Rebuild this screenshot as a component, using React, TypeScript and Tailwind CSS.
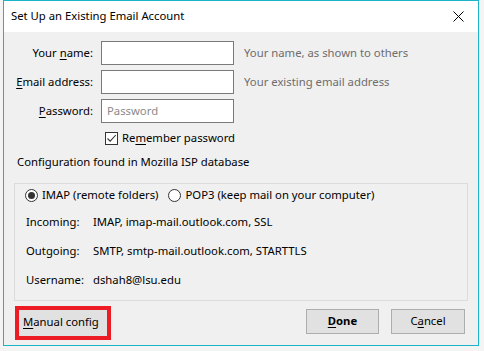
import React from 'react'

const font = { fontFamily: '"Noto Sans", "Open Sans", sans-serif' }

function U({ children }: { children: React.ReactNode }) {
  return <span className="underline underline-offset-2 decoration-1">{children}</span>
}

function Field({ label, hint, placeholder }: { label: React.ReactNode; hint?: string; placeholder?: string }) {
  return (
    <div className="flex items-center h-[24px]">
      <div className="w-[89px] text-right text-[#000]">{label}</div>
      <div className="ml-[8px] w-[133px] h-[24px] border border-[#7a7a7a] bg-white flex items-center px-[5px] text-[#8a8a8a]">
        {placeholder}
      </div>
      {hint && <div className="ml-[10px] text-[#6d6d6d]">{hint}</div>}
    </div>
  )
}

function Radio({ checked, label }: { checked?: boolean; label: string }) {
  return (
    <div className="flex items-center gap-[4px]">
      <span className="w-[13px] h-[13px] rounded-full border border-[#333] bg-white flex items-center justify-center">
        {checked && <span className="w-[7px] h-[7px] rounded-full bg-[#333]" />}
      </span>
      <span>{label}</span>
    </div>
  )
}

function Row({ label, value }: { label: string; value: string }) {
  return (
    <div className="flex items-center h-[18px]">
      <span className="w-[67px]">{label}</span>
      <span>{value}</span>
    </div>
  )
}

export default function App() {
  return (
    <div className="w-[484px] h-[351px] bg-[#f4f4f4] pl-[3px] pr-[5px] pb-[5px] text-[11.3px] text-[#1a1a1a]" style={font}>
      <div className="w-[476px] h-[346px] border border-[#1cb4c8] bg-[#f0f0f0] flex flex-col">
        {/* Title bar */}
        <div className="h-[31px] bg-white flex items-center justify-between pl-[7px] pr-[14px] flex-shrink-0">
          <span className="text-[#000]">Set Up an Existing Email Account</span>
          <svg width="11" height="11" viewBox="0 0 11 11">
            <path d="M0.5 0.5 L10.5 10.5 M10.5 0.5 L0.5 10.5" stroke="#000" strokeWidth="1" />
          </svg>
        </div>

        {/* Form */}
        <div className="flex flex-col gap-[5px] pt-[9px]">
          <Field label={<>Your <U>n</U>ame:</>} hint="Your name, as shown to others" />
          <Field label={<><U>E</U>mail address:</>} hint="Your existing email address" />
          <Field label={<><U>P</U>assword:</>} placeholder="Password" />
        </div>
        <div className="flex items-center ml-[101px] mt-[8px] h-[14px] gap-[4px]">
          <span className="w-[13px] h-[13px] border border-[#333] bg-white flex items-center justify-center">
            <svg width="11" height="11" viewBox="0 0 11 11">
              <path d="M1.5 5.5 L4.2 8.2 L9.8 2" stroke="#333" strokeWidth="1.1" fill="none" />
            </svg>
          </span>
          <span className="text-[#000]">Re<U>m</U>ember password</span>
        </div>

        <div className="ml-[13px] mt-[9px] text-[#000]">Configuration found in Mozilla ISP database</div>

        {/* Group */}
        <div className="mx-[10px] mt-[12px] h-[118px] border border-[#dcdcdc] flex flex-col pl-[11px] pt-[3px] text-[#000]">
          <div className="flex items-center gap-[10px] h-[18px] -ml-[1px]">
            <Radio checked label="IMAP (remote folders)" />
            <Radio label="POP3 (keep mail on your computer)" />
          </div>
          <div className="flex flex-col gap-[11px] mt-[9px]">
            <Row label="Incoming:" value="IMAP, imap-mail.outlook.com, SSL" />
            <Row label="Outgoing:" value="SMTP, smtp-mail.outlook.com, STARTTLS" />
            <Row label="Username:" value="dshah8@lsu.edu" />
          </div>
        </div>

        {/* Buttons */}
        <div className="flex items-start justify-between ml-[11px] mr-[13px] mt-[5px] text-[#000]">
          <div className="border-[4px] border-[#ed1c24] w-[96px] h-[34px]">
            <button className="w-full h-full bg-[#e1e1e1] text-left pl-[4px]">
              <U>M</U>anual config
            </button>
          </div>
          <div className="flex items-center gap-[12px] mt-[3px]">
            <button className="w-[73px] h-[25px] bg-[#e1e1e1] border border-[#adadad] font-bold">
              <U>D</U>one
            </button>
            <button className="w-[74px] h-[25px] bg-[#e1e1e1] border border-[#adadad]">
              C<U>a</U>ncel
            </button>
          </div>
        </div>
      </div>
    </div>
  )
}
